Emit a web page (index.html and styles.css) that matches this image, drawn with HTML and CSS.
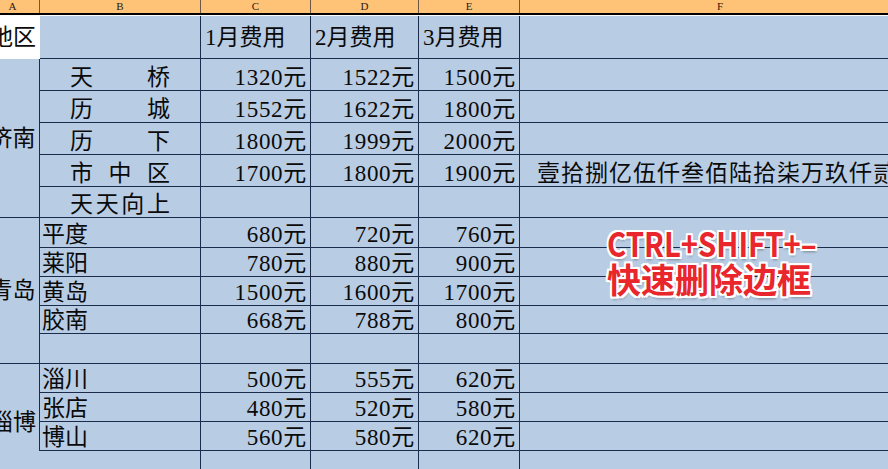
FILE: index.html
```html
<!DOCTYPE html>
<html lang="zh-CN">
<head>
<meta charset="utf-8">
<title>Sheet</title>
<link rel="stylesheet" href="styles.css">
</head>
<body>
<div class="sheet">
  <div class="colhead">
    <div class="ch">A</div>
    <div class="ch">B</div>
    <div class="ch">C</div>
    <div class="ch">D</div>
    <div class="ch">E</div>
    <div class="ch last">F</div>
  </div>
  <div class="grid">
    <!-- row 1 -->
    <div class="c a-head">地区</div>
    <div class="c"></div>
    <div class="c hd">1月费用</div>
    <div class="c hd">2月费用</div>
    <div class="c hd">3月费用</div>
    <div class="c"></div>

    <!-- 济南 -->
    <div class="c merge span5">济南</div>
    <div class="c dist"><span>天</span><span>桥</span></div>
    <div class="c num">1320元</div>
    <div class="c num">1522元</div>
    <div class="c num">1500元</div>
    <div class="c"></div>

    <div class="c dist"><span>历</span><span>城</span></div>
    <div class="c num">1552元</div>
    <div class="c num">1622元</div>
    <div class="c num">1800元</div>
    <div class="c"></div>

    <div class="c dist"><span>历</span><span>下</span></div>
    <div class="c num">1800元</div>
    <div class="c num">1999元</div>
    <div class="c num">2000元</div>
    <div class="c"></div>

    <div class="c dist"><span>市</span><span>中</span><span>区</span></div>
    <div class="c num">1700元</div>
    <div class="c num">1800元</div>
    <div class="c num">1900元</div>
    <div class="c words">壹拾捌亿伍仟叁佰陆拾柒万玖仟贰</div>

    <div class="c dist"><span>天</span><span>天</span><span>向</span><span>上</span></div>
    <div class="c"></div>
    <div class="c"></div>
    <div class="c"></div>
    <div class="c"></div>

    <!-- 青岛 -->
    <div class="c merge span5">青岛</div>
    <div class="c name">平度</div>
    <div class="c num">680元</div>
    <div class="c num">720元</div>
    <div class="c num">760元</div>
    <div class="c"></div>

    <div class="c name">莱阳</div>
    <div class="c num">780元</div>
    <div class="c num">880元</div>
    <div class="c num">900元</div>
    <div class="c"></div>

    <div class="c name">黄岛</div>
    <div class="c num">1500元</div>
    <div class="c num">1600元</div>
    <div class="c num">1700元</div>
    <div class="c"></div>

    <div class="c name">胶南</div>
    <div class="c num">668元</div>
    <div class="c num">788元</div>
    <div class="c num">800元</div>
    <div class="c"></div>

    <div class="c"></div>
    <div class="c"></div>
    <div class="c"></div>
    <div class="c"></div>
    <div class="c"></div>

    <!-- 淄博 -->
    <div class="c merge span4 open">淄博</div>
    <div class="c name edge">淄川</div>
    <div class="c num">500元</div>
    <div class="c num">555元</div>
    <div class="c num">620元</div>
    <div class="c"></div>

    <div class="c name edge">张店</div>
    <div class="c num">480元</div>
    <div class="c num">520元</div>
    <div class="c num">580元</div>
    <div class="c"></div>

    <div class="c name edge">博山</div>
    <div class="c num">560元</div>
    <div class="c num">580元</div>
    <div class="c num">620元</div>
    <div class="c"></div>

    <div class="c tail"></div>
    <div class="c tail"></div>
    <div class="c tail"></div>
    <div class="c tail"></div>
    <div class="c tail"></div>
  </div>
</div>
<div class="note">
  <div class="note-line keys">CTRL+SHIFT+–</div>
  <div class="note-line">快速删除边框</div>
</div>
</body>
</html>
```

FILE: styles.css
```css
* {
  box-sizing: border-box;
}

html,
body {
  margin: 0;
  padding: 0;
}

body {
  width: 888px;
  height: 469px;
  overflow: hidden;
  position: relative;
  background: #ffffff;
  color: #000000;
  font-family: "Liberation Serif", "Noto Sans CJK SC", serif;
}

.sheet {
  margin-left: -14px;
  width: 934px;
}

.colhead {
  display: grid;
  grid-template-columns: 54px 161px 110px 108px 101px 400px;
  height: 15px;
  background: #ffc378;
  border-bottom: 2px solid #000000;
  margin-bottom: 1px;
}

.ch {
  font: 11px/13px "Liberation Serif", serif;
  color: #2a1a10;
  text-align: center;
  border-right: 1px solid #6e5a44;
}

.ch.last {
  border-right: none;
}

.grid {
  display: grid;
  grid-template-columns: 54px 161px 110px 108px 101px 400px;
  grid-template-rows: 43px 32px 32px 32px 32px 31px 30px 29px 29px 28px 30px 29px 29px 29px 30px;
  background: #b8cce4;
  font-size: 23px;
  color: #0a0a0a;
}

.c {
  display: flex;
  align-items: flex-end;
  padding-bottom: 1px;
  line-height: 23px;
  white-space: nowrap;
  overflow: hidden;
  border-right: 1px solid #1b2b4b;
  border-bottom: 1px solid #1b2b4b;
}

.a-head {
  background: #ffffff;
  border: none;
  align-items: center;
  justify-content: center;
  padding-bottom: 0;
}

.hd {
  align-items: center;
  padding-left: 4px;
  padding-bottom: 0;
}

.merge {
  align-items: center;
  justify-content: center;
  padding-bottom: 0;
}

.span5 {
  grid-row: span 5;
}

.span4 {
  grid-row: span 4;
}

.merge.open {
  border: none;
}

.dist {
  justify-content: space-between;
  padding-left: 30px;
  padding-right: 30px;
}

.name {
  padding-left: 2px;
}

.name.edge {
  box-shadow: -1px 0 0 #1b2b4b;
}

.num {
  justify-content: flex-end;
  padding-right: 3px;
  letter-spacing: 0.7px;
}

.words {
  padding-left: 17px;
  letter-spacing: 1px;
}

.tail {
  border-bottom: none;
}

.note {
  position: absolute;
  left: 607px;
  top: 225px;
  font-family: "Noto Sans CJK SC", sans-serif;
  font-weight: 700;
  font-size: 34px;
  line-height: 36px;
  color: #e8262b;
  text-shadow:
    2px 0 0 #ffffff, -2px 0 0 #ffffff, 0 2px 0 #ffffff, 0 -2px 0 #ffffff,
    2px 2px 0 #ffffff, -2px -2px 0 #ffffff, 2px -2px 0 #ffffff, -2px 2px 0 #ffffff,
    1px 3px 3px rgba(0, 0, 0, 0.35);
}

.note-line {
  white-space: nowrap;
}

.keys {
  transform: scaleX(0.86);
  transform-origin: left center;
}
```
